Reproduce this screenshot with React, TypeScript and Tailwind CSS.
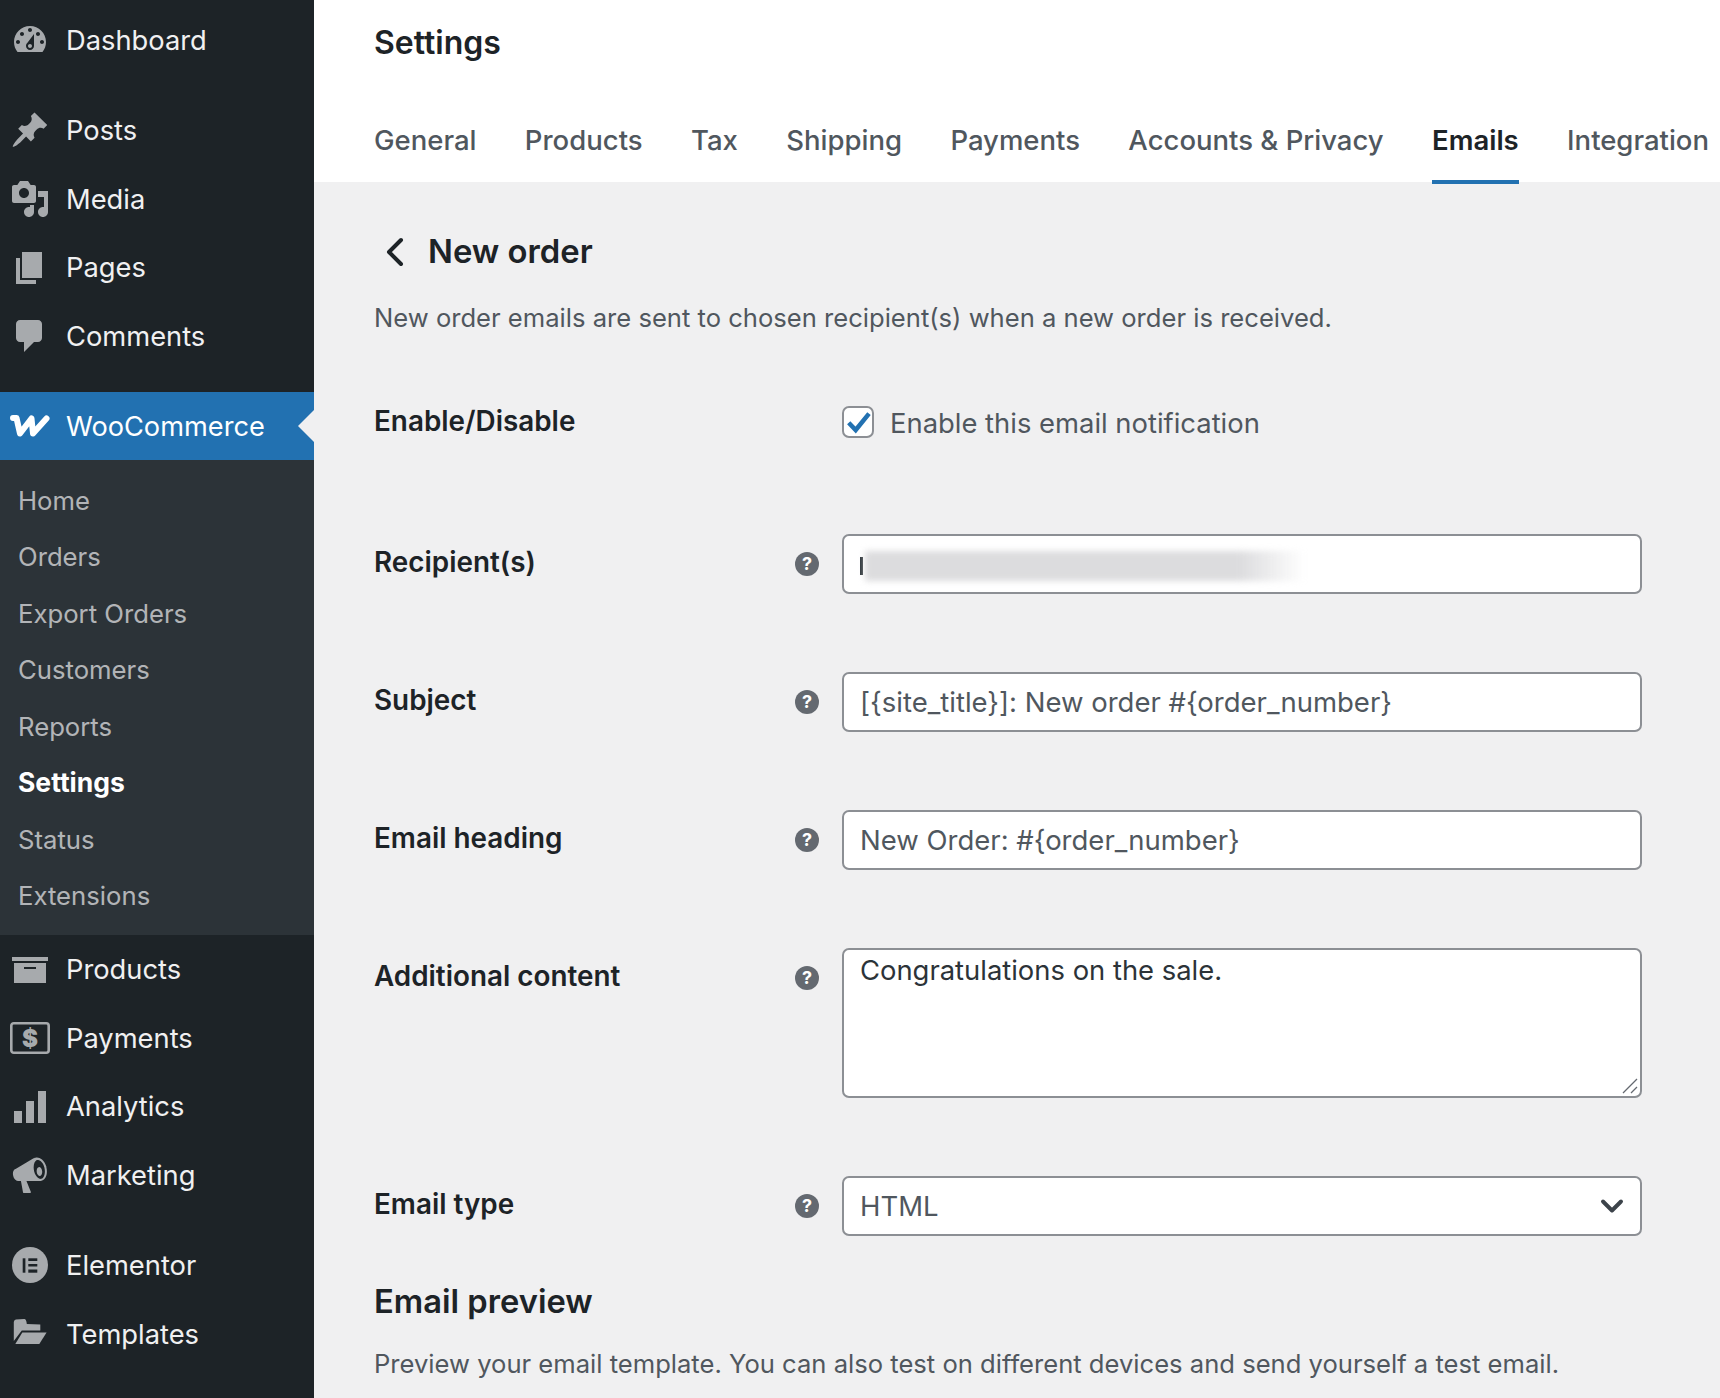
import { ChevronDown, ChevronLeft } from "lucide-react";

const iconPaths: Record<string, string> = {
  dashboard:
    "M3.76 16h12.48c1.1-1.37 1.76-3.11 1.76-5 0-4.42-3.58-8-8-8s-8 3.58-8 8c0 1.89.66 3.63 1.76 5zM10 4c.55 0 1 .45 1 1s-.45 1-1 1-1-.45-1-1 .45-1 1-1zM6 6c.55 0 1 .45 1 1s-.45 1-1 1-1-.45-1-1 .45-1 1-1zm8 0c.55 0 1 .45 1 1s-.45 1-1 1-1-.45-1-1 .45-1 1-1zm-5.37 5.55L12 7v6c0 1.1-.9 2-2 2s-2-.9-2-2c0-.57.24-1.08.63-1.45zM4 10c.55 0 1 .45 1 1s-.45 1-1 1-1-.45-1-1 .45-1 1-1zm12 0c.55 0 1 .45 1 1s-.45 1-1 1-1-.45-1-1 .45-1 1-1zm-5 3c0-.55-.45-1-1-1s-1 .45-1 1 .45 1 1 1 1-.45 1-1z",
  pin: "M10.44 3.02l1.82-1.82 6.36 6.35-1.83 1.82c-1.05-.68-2.48-.57-3.41.36l-.75.75c-.92.93-1.04 2.35-.35 3.41l-1.83 1.82-2.41-2.41-2.8 2.79c-.42.42-3.38 2.71-3.8 2.29s1.86-3.39 2.28-3.81l2.79-2.79L4.1 9.36l1.83-1.82c1.05.69 2.48.57 3.4-.36l.75-.75c.93-.92 1.05-2.35.36-3.41z",
  media:
    "M13 11V4c0-.55-.45-1-1-1h-1.67L9 1H5L3.67 3H2c-.55 0-1 .45-1 1v7c0 .55.45 1 1 1h10c.55 0 1-.45 1-1zM7 4.5c1.38 0 2.5 1.12 2.5 2.5S8.38 9.5 7 9.5 4.5 8.38 4.5 7 5.62 4.5 7 4.5zM14 6h5v10.5c0 1.38-1.12 2.5-2.5 2.5S14 17.88 14 16.5s1.12-2.5 2.5-2.5c.17 0 .34.02.5.05V9h-3V6zm-4 8.05V13h2v3.5c0 1.38-1.12 2.5-2.5 2.5S7 17.88 7 16.5 8.12 14 9.5 14c.17 0 .34.02.5.05z",
  page: "M6 15V2h10v13H6zm-1 1h8v2H3V5h2v11z",
  comment: "M5 2h9c1.1 0 2 .9 2 2v7c0 1.1-.9 2-2 2h-2l-5 5v-5H5c-1.1 0-2-.9-2-2V4c0-1.1.9-2 2-2z",
  archive: "M19 4v2H1V4h18zM2 7h16v10H2V7zm11 3V9H7v1h6z",
  analytics: "M18 18V2h-4v16h4zm-6 0V7H8v11h4zm-6 0v-6H2v6h4z",
  megaphone:
    "M18.15 5.94c.46 1.62.38 3.22-.02 4.48-.42 1.28-1.26 2.18-2.3 2.48-.16.06-.26.06-.4.06-.06.02-.12.02-.18.02-.06.02-.14.02-.22.02h-6.8l2.22 5.5c.02.14-.06.26-.14.34-.08.1-.24.16-.34.16H6.95c-.1 0-.26-.06-.34-.16-.08-.08-.16-.2-.14-.34l-1-5.5H4.25l-.02-.02c-.5.06-1.08-.18-1.54-.62s-.88-1.08-1.06-1.88c-.24-.8-.2-1.56-.02-2.2.18-.62.58-1.08 1.16-1.26l.02-.02 9-5.32c.12-.06.26-.14.46-.18.06-.04.14-.08.24-.12.04-.02.08-.02.1-.04.06-.02.1-.02.18-.02 1.04-.3 2.24.1 3.22.98s1.84 2.24 2.3 3.86zm-2.58 5.98h-.02c.4-.1.74-.34 1.04-.7.58-.7.86-1.76.86-3.04-.02-.64-.1-1.3-.26-1.98-.2-.66-.42-1.28-.72-1.82-.3-.52-.68-.96-1.06-1.3-.4-.32-.8-.54-1.24-.62-.2-.02-.4-.02-.58.04-.58.16-1.02.62-1.32 1.28-.3.66-.46 1.5-.44 2.46.02.64.1 1.32.26 1.98.2.68.42 1.3.72 1.82.76 1.36 1.82 2.14 2.76 1.88zm-1.2-5.84c.36-.1.76.1 1.1.48.28.36.52.9.62 1.52.04.62-.02 1.2-.2 1.6-.18.46-.46.74-.82.84-.34.08-.74-.1-1.08-.48-.32-.38-.58-.92-.64-1.54-.06-.6 0-1.18.18-1.62.18-.42.46-.72.84-.8z",
};

function MenuIcon({ name }: { name: string }) {
  return (
    <svg viewBox="0 0 20 20" className="w-[40px] h-[40px]" fill="#a7aaad">
      <path fillRule="evenodd" d={iconPaths[name]} />
    </svg>
  );
}

function PaymentsIcon() {
  return (
    <svg viewBox="0 0 40 32" className="w-[40px] h-[32px]">
      <rect x="1.300" y="1.300" width="37.4" height="29.4" rx="2.5" fill="none" stroke="#a7aaad" strokeWidth="2.6" />
      <text x="20" y="24.500" textAnchor="middle" fontSize="24" fontWeight="900" fill="#a7aaad" fontFamily="Inter, sans-serif">
        $
      </text>
    </svg>
  );
}

function ElementorIcon() {
  return (
    <svg viewBox="0 0 36 36" className="w-[36px] h-[36px]">
      <circle cx="18" cy="18" r="18" fill="#a7aaad" />
      <rect x="10.700" y="11.300" width="2.700" height="14.400" fill="#1d2327" />
      <rect x="16.300" y="11.300" width="9" height="2.700" fill="#1d2327" />
      <rect x="16.300" y="17" width="9" height="2.500" fill="#1d2327" />
      <rect x="16.300" y="22.500" width="9" height="3.200" fill="#1d2327" />
    </svg>
  );
}

function FolderIcon() {
  return (
    <svg viewBox="0 0 40 40" className="w-[40px] h-[40px]" fill="#a7aaad">
      <g transform="translate(3.3 5)">
        <path d="M0.5 3Q0.5 1 2.5 .5L11 0Q13 0 13.500 5L27 5.500V11.500H8.500L0.500 22Z" />
        <path d="M9 13.500H33.300L26 25H2Z" />
      </g>
    </svg>
  );
}

function WooIcon() {
  return (
    <svg
      viewBox="0 0 40 22"
      className="w-[40px] h-[22px]"
      fill="none"
      stroke="#fff"
      strokeWidth="6"
      strokeLinecap="round"
      strokeLinejoin="round"
    >
      <path d="M3 3H6.500L10 18.500L21.500 3.500L23 18.500L36.500 3.500" />
    </svg>
  );
}

function HelpIcon() {
  return (
    <div className="w-[24px] h-[24px] rounded-full bg-[#646970] flex items-center justify-center text-white text-[18px] font-bold leading-none">
      ?
    </div>
  );
}

function SideItem({ label, icon }: { label: string; icon: React.ReactNode }) {
  return (
    <div className="h-[68.6px] flex items-center text-[#f0f0f1] text-[27.3px]">
      <div className="w-[60px] flex justify-center shrink-0">{icon}</div>
      <span className="ml-[6px] mt-[2.5px]">{label}</span>
    </div>
  );
}

const subItems = ["Home", "Orders", "Export Orders", "Customers", "Reports", "Settings", "Status", "Extensions"];
const tabs = ["General", "Products", "Tax", "Shipping", "Payments", "Accounts & Privacy", "Emails", "Integration"];

function Row({ label, children, help = true, className }: { label: string; children: React.ReactNode; help?: boolean; className?: string }) {
  return (
    <div className={"flex items-start " + (className ?? "")}>
      <div className="w-[468px] pr-[23px] flex justify-between shrink-0 h-[60px] items-center">
        <span className="text-[27.85px] font-semibold text-[#1d2327] mb-[3px]">{label}</span>
        {help && <HelpIcon />}
      </div>
      <div className="w-[800px]">{children}</div>
    </div>
  );
}

const inputClass =
  "w-full h-[60px] bg-white border-2 border-[#8c8f94] rounded-[7px] px-[16px] pt-[2px] flex items-center text-[27.5px] text-[#50575e]";

export default function App() {
  return (
    <div className="flex w-[1720px] h-[1398px] overflow-hidden bg-[#f0f0f1] font-['Inter',sans-serif]">
      <aside className="w-[314px] shrink-0 bg-[#1d2327] pt-[6px]">
        <SideItem label="Dashboard" icon={<MenuIcon name="dashboard" />} />
        <div className="h-[21.5px]" />
        <SideItem label="Posts" icon={<MenuIcon name="pin" />} />
        <SideItem label="Media" icon={<MenuIcon name="media" />} />
        <SideItem label="Pages" icon={<MenuIcon name="page" />} />
        <SideItem label="Comments" icon={<MenuIcon name="comment" />} />
        <div className="h-[21.6px]" />
        <div className="relative bg-[#2271b1] text-white">
          <div className="h-[68px] flex items-center text-[27.2px]">
            <div className="w-[60px] flex justify-center shrink-0">
              <WooIcon />
            </div>
            <span className="ml-[6px] mt-[2.5px]">WooCommerce</span>
          </div>
          <div className="absolute right-0 top-[18px] w-0 h-0 border-y-[16px] border-y-transparent border-r-[16px] border-r-[#f0f0f1]" />
        </div>
        <div className="bg-[#2c3338] pt-[12px] pb-[11px]">
          {subItems.map((s) => (
            <div
              key={s}
              className={
                s === "Settings"
                  ? "h-[56.5px] flex items-center pl-[18px] text-[26.5px] font-bold text-white"
                  : "h-[56.5px] flex items-center pl-[18px] text-[25.7px] text-[#f0f0f1b3]"
              }
            >
              <span className="mt-[1px]">{s}</span>
            </div>
          ))}
        </div>
        <SideItem label="Products" icon={<MenuIcon name="archive" />} />
        <SideItem label="Payments" icon={<PaymentsIcon />} />
        <SideItem label="Analytics" icon={<MenuIcon name="analytics" />} />
        <SideItem label="Marketing" icon={<MenuIcon name="megaphone" />} />
        <div className="h-[21.5px]" />
        <SideItem label="Elementor" icon={<ElementorIcon />} />
        <SideItem label="Templates" icon={<FolderIcon />} />
      </aside>

      <main className="flex-1 min-w-0">
        <header className="bg-white h-[182px] pl-[60px]">
          <h1 className="pt-[22px] text-[32px] leading-[42px] font-semibold text-[#1d2327]">Settings</h1>
          <nav className="flex gap-[48.4px] mt-[51px]">
            {tabs.map((t) => (
              <div
                key={t}
                className={
                  t === "Emails"
                    ? "relative z-10 h-[69px] pt-[5px] text-[27.5px] leading-[40px] font-semibold whitespace-nowrap text-[#1d2327] border-b-[4px] border-[#2271b1]"
                    : "h-[69px] pt-[5px] text-[27.5px] leading-[40px] font-medium whitespace-nowrap text-[#50575e]"
                }
              >
                {t}
              </div>
            ))}
          </nav>
        </header>

        <div className="pl-[60px]">
          <div className="flex items-center pt-[47px] h-[93px]">
            <ChevronLeft className="w-[48px] h-[48px] -ml-[3px] mr-[9px] text-[#1d2327]" strokeWidth={2} />
            <h2 className="text-[32.8px] font-semibold text-[#1d2327]">New order</h2>
          </div>
          <p className="mt-[23px] text-[25.6px] leading-[40px] text-[#50575e]">
            New order emails are sent to chosen recipient(s) when a new order is received.
          </p>

          <Row label="Enable/Disable" help={false} className="mt-[55px]">
            <div className="flex items-center h-[58px]">
              <div className="w-[32px] h-[32px] bg-white border-2 border-[#8c8f94] rounded-[7px] flex items-center justify-center">
                <svg viewBox="2 2 28 28" className="w-[28px] h-[28px]" fill="none" stroke="#2271b1" strokeWidth="4.5" strokeLinejoin="miter">
                  <path d="M6.700 16.700L13.700 24L27 7.700" />
                </svg>
              </div>
              <span className="ml-[16px] mt-[3px] text-[27.4px] text-[#50575e]">Enable this email notification</span>
            </div>
          </Row>

          <Row label="Recipient(s)" className="mt-[81px]">
            <div className={inputClass + " relative"}>
              <span className="w-[3px] h-[18px] bg-[#2c3338] mt-[2px]" />
              <div className="absolute left-[21px] top-[15px] w-[440px] h-[30px] bg-linear-to-r from-[#dcdcde] from-85% to-transparent blur-[3px]" />
            </div>
          </Row>
          <Row label="Subject" className="mt-[78px]">
            <div className={inputClass}>{"[{site_title}]: New order #{order_number}"}</div>
          </Row>
          <Row label="Email heading" className="mt-[78px]">
            <div className={inputClass}>{"New Order: #{order_number}"}</div>
          </Row>
          <Row label="Additional content" className="mt-[78px]">
            <div className="relative w-full h-[150px] bg-white border-2 border-[#8c8f94] rounded-[7px] px-[16px] pt-[1px] text-[27.4px] leading-[38px] text-[#2c3338]">
              Congratulations on the sale.
              <svg viewBox="0 0 16 16" className="absolute right-[2px] bottom-[2px] w-[16px] h-[16px]" stroke="#646970" strokeWidth="1.3">
                <path d="M1 15L15 1M9 15l6-6" />
              </svg>
            </div>
          </Row>
          <Row label="Email type" className="mt-[78px]">
            <div className={inputClass + " justify-between text-[#2c3338]"}>
              HTML
              <ChevronDown className="w-[36px] h-[36px] -mr-[6px] -mt-[2px] text-[#3c434a]" strokeWidth={2.6} />
            </div>
          </Row>
          <h2 className="mt-[40px] text-[32.7px] leading-[50px] font-semibold text-[#1d2327]">Email preview</h2>
          <p className="mt-[18px] text-[25.6px] leading-[40px] text-[#50575e] whitespace-nowrap">
            Preview your email template. You can also test on different devices and send yourself a test email.
          </p>
        </div>
      </main>
    </div>
  );
}
